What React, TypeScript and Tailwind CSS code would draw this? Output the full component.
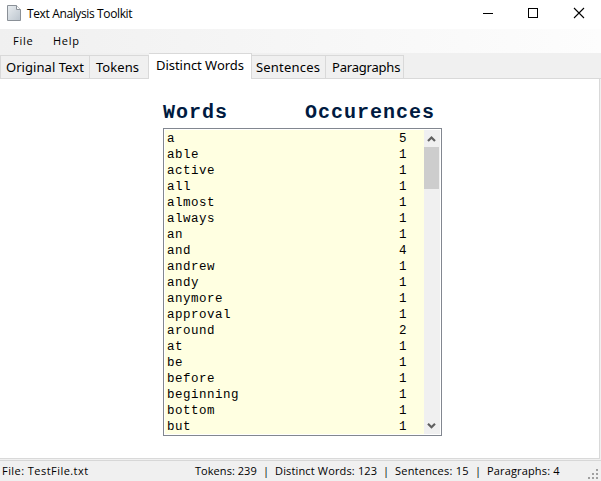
const words: [string, number][] = [
  ['a', 5], ['able', 1], ['active', 1], ['all', 1], ['almost', 1], ['always', 1], ['an', 1],
  ['and', 4], ['andrew', 1], ['andy', 1], ['anymore', 1], ['approval', 1], ['around', 2],
  ['at', 1], ['be', 1], ['before', 1], ['beginning', 1], ['bottom', 1], ['but', 1],
];

function TitleBar() {
  return (
    <header className="flex h-[29px] shrink-0 items-center bg-white pl-[7px] font-['Open_Sans','Noto_Sans',sans-serif]">
      <svg width="14" height="16" viewBox="0 0 14 16" className="mb-[3px] shrink-0">
        <defs>
          <linearGradient id="page" x1="0" y1="0" x2="1" y2="1">
            <stop offset="0" stopColor="#e9edf0" />
            <stop offset="1" stopColor="#bcc5ce" />
          </linearGradient>
        </defs>
        <path d="M.5.5h9l4 4v11H.5z" fill="url(#page)" stroke="#8a9097" />
        <path d="M9.5.5v4h4" fill="#f7f8f9" stroke="#8a9097" />
      </svg>
      <span className="ml-1.5 whitespace-nowrap pb-px text-[12px] tracking-[-0.37px] text-black">Text Analysis Toolkit</span>
      <div className="ml-auto flex h-full items-center">
        <svg width="118" height="29" viewBox="0 0 118 29" fill="none" stroke="#000" shapeRendering="crispEdges">
          <path d="M0 13.5h10" />
          <rect x="45.5" y="8.5" width="9" height="9" />
          <path d="M91 8l10 10M101 8L91 18" shapeRendering="auto" strokeWidth="1.1" />
        </svg>
      </div>
    </header>
  );
}

function MenuBar() {
  return (
    <nav className="flex h-6 shrink-0 items-center bg-linear-to-r from-[#f0f0f0] to-[#fdfdfd] pl-[13px] font-['Open_Sans','Noto_Sans',sans-serif] text-[11px] text-black">
      <span className="w-10 tracking-[0.75px]">File</span>
      <span className="tracking-[0.75px]">Help</span>
    </nav>
  );
}

const tab = 'h-6 shrink-0 whitespace-nowrap border-t border-r border-b border-[#d9d9d9] bg-[#f0f0f0] leading-[22px]';

function TabStrip() {
  return (
    <div className="flex h-[26px] shrink-0 items-end bg-[#f0f0f0] font-['Noto_Sans','Open_Sans',sans-serif] text-[13px] text-black">
      <div className={`${tab} w-[90px] border-l pl-[5px] tracking-[0.05px]`}>Original Text</div>
      <div className={`${tab} w-[59px] pl-1.5 tracking-[0.05px]`}>Tokens</div>
      <div className="h-[26px] w-[103px] shrink-0 whitespace-nowrap border-t border-r border-[#d9d9d9] bg-white pl-[7px] leading-[22px] tracking-[-0.04px]">Distinct Words</div>
      <div className={`${tab} w-[74px] pl-1 tracking-[0.2px]`}>Sentences</div>
      <div className={`${tab} w-[78px] pl-1.5 tracking-[-0.2px]`}>Paragraphs</div>
      <div className="h-px flex-1 bg-[#d9d9d9]" />
    </div>
  );
}

function ScrollBar() {
  return (
    <div className="flex w-4 shrink-0 flex-col bg-[#f0f0f0]">
      <svg width="16" height="17" viewBox="0 0 16 17" fill="none" stroke="#606060" strokeWidth="2.2">
        <path d="M4 11l3.5-3.5 3.5 3.5" />
      </svg>
      <div className="mr-px h-[42px] bg-[#cdcdcd]" />
      <svg width="16" height="17" viewBox="0 0 16 17" fill="none" stroke="#606060" strokeWidth="2.2" className="mt-auto">
        <path d="M4 6.7l3.5 3.5 3.5-3.5" />
      </svg>
    </div>
  );
}

function WordList() {
  return (
    <main className="min-h-0 flex-1 border-r border-[#f0f0f0] bg-white">
      <div className="h-full border-r border-b border-[#d9d9d9] pl-[163px] pt-[21px] font-['Liberation_Mono','Courier_New',monospace]">
        <div className="flex h-[28px] w-[272px] justify-between text-[20px] leading-[26px] font-bold tracking-[1px] text-[#001a40]">
          <span>Words</span>
          <span>Occurences</span>
        </div>
        <div className="flex h-[308px] w-[279px] border border-[#828790] bg-white p-px">
          <div className="flex-1 bg-[#ffffe1] pt-px pl-0.5 pr-[17px] text-[12.5px] leading-4 tracking-[0.5px] text-black">
            {words.map(([word, count]) => (
              <div key={word} className="flex h-4 justify-between">
                <span>{word}</span>
                <span>{count}</span>
              </div>
            ))}
          </div>
          <ScrollBar />
        </div>
      </div>
    </main>
  );
}

function StatusBar() {
  return (
    <footer className="flex h-[22px] shrink-0 flex-col bg-[#f0f0f0]">
      <div className="mt-px h-px bg-[#d7d7d7]" />
      <div className="flex h-5 items-center whitespace-nowrap pl-0.5 font-['Open_Sans','Noto_Sans',sans-serif] text-[11px] text-black">
        <span className="w-[193px] tracking-[0.45px]">File: TestFile.txt</span>
        <span className="w-[68px] tracking-[0.05px]">Tokens: 239</span>
        <span className="w-3">|</span>
        <span className="w-[108px] tracking-[0.15px]">Distinct Words: 123</span>
        <span className="w-3">|</span>
        <span className="w-20 tracking-[0.22px]">Sentences: 15</span>
        <span className="w-3">|</span>
        <span className="tracking-[0.15px]">Paragraphs: 4</span>
        <svg width="12" height="12" viewBox="0 0 12 12" fill="#a0a0a0" className="ml-auto mt-1.5 mr-px" shapeRendering="crispEdges">
          <path d="M8 1h2v2H8zM4 5h2v2H4zM8 5h2v2H8zM0 9h2v2H0zM4 9h2v2H4zM8 9h2v2H8z" />
        </svg>
      </div>
    </footer>
  );
}

export default function App() {
  return (
    <div className="flex h-[481px] w-[601px] flex-col overflow-hidden bg-[#f0f0f0]">
      <TitleBar />
      <MenuBar />
      <TabStrip />
      <WordList />
      <StatusBar />
    </div>
  );
}
